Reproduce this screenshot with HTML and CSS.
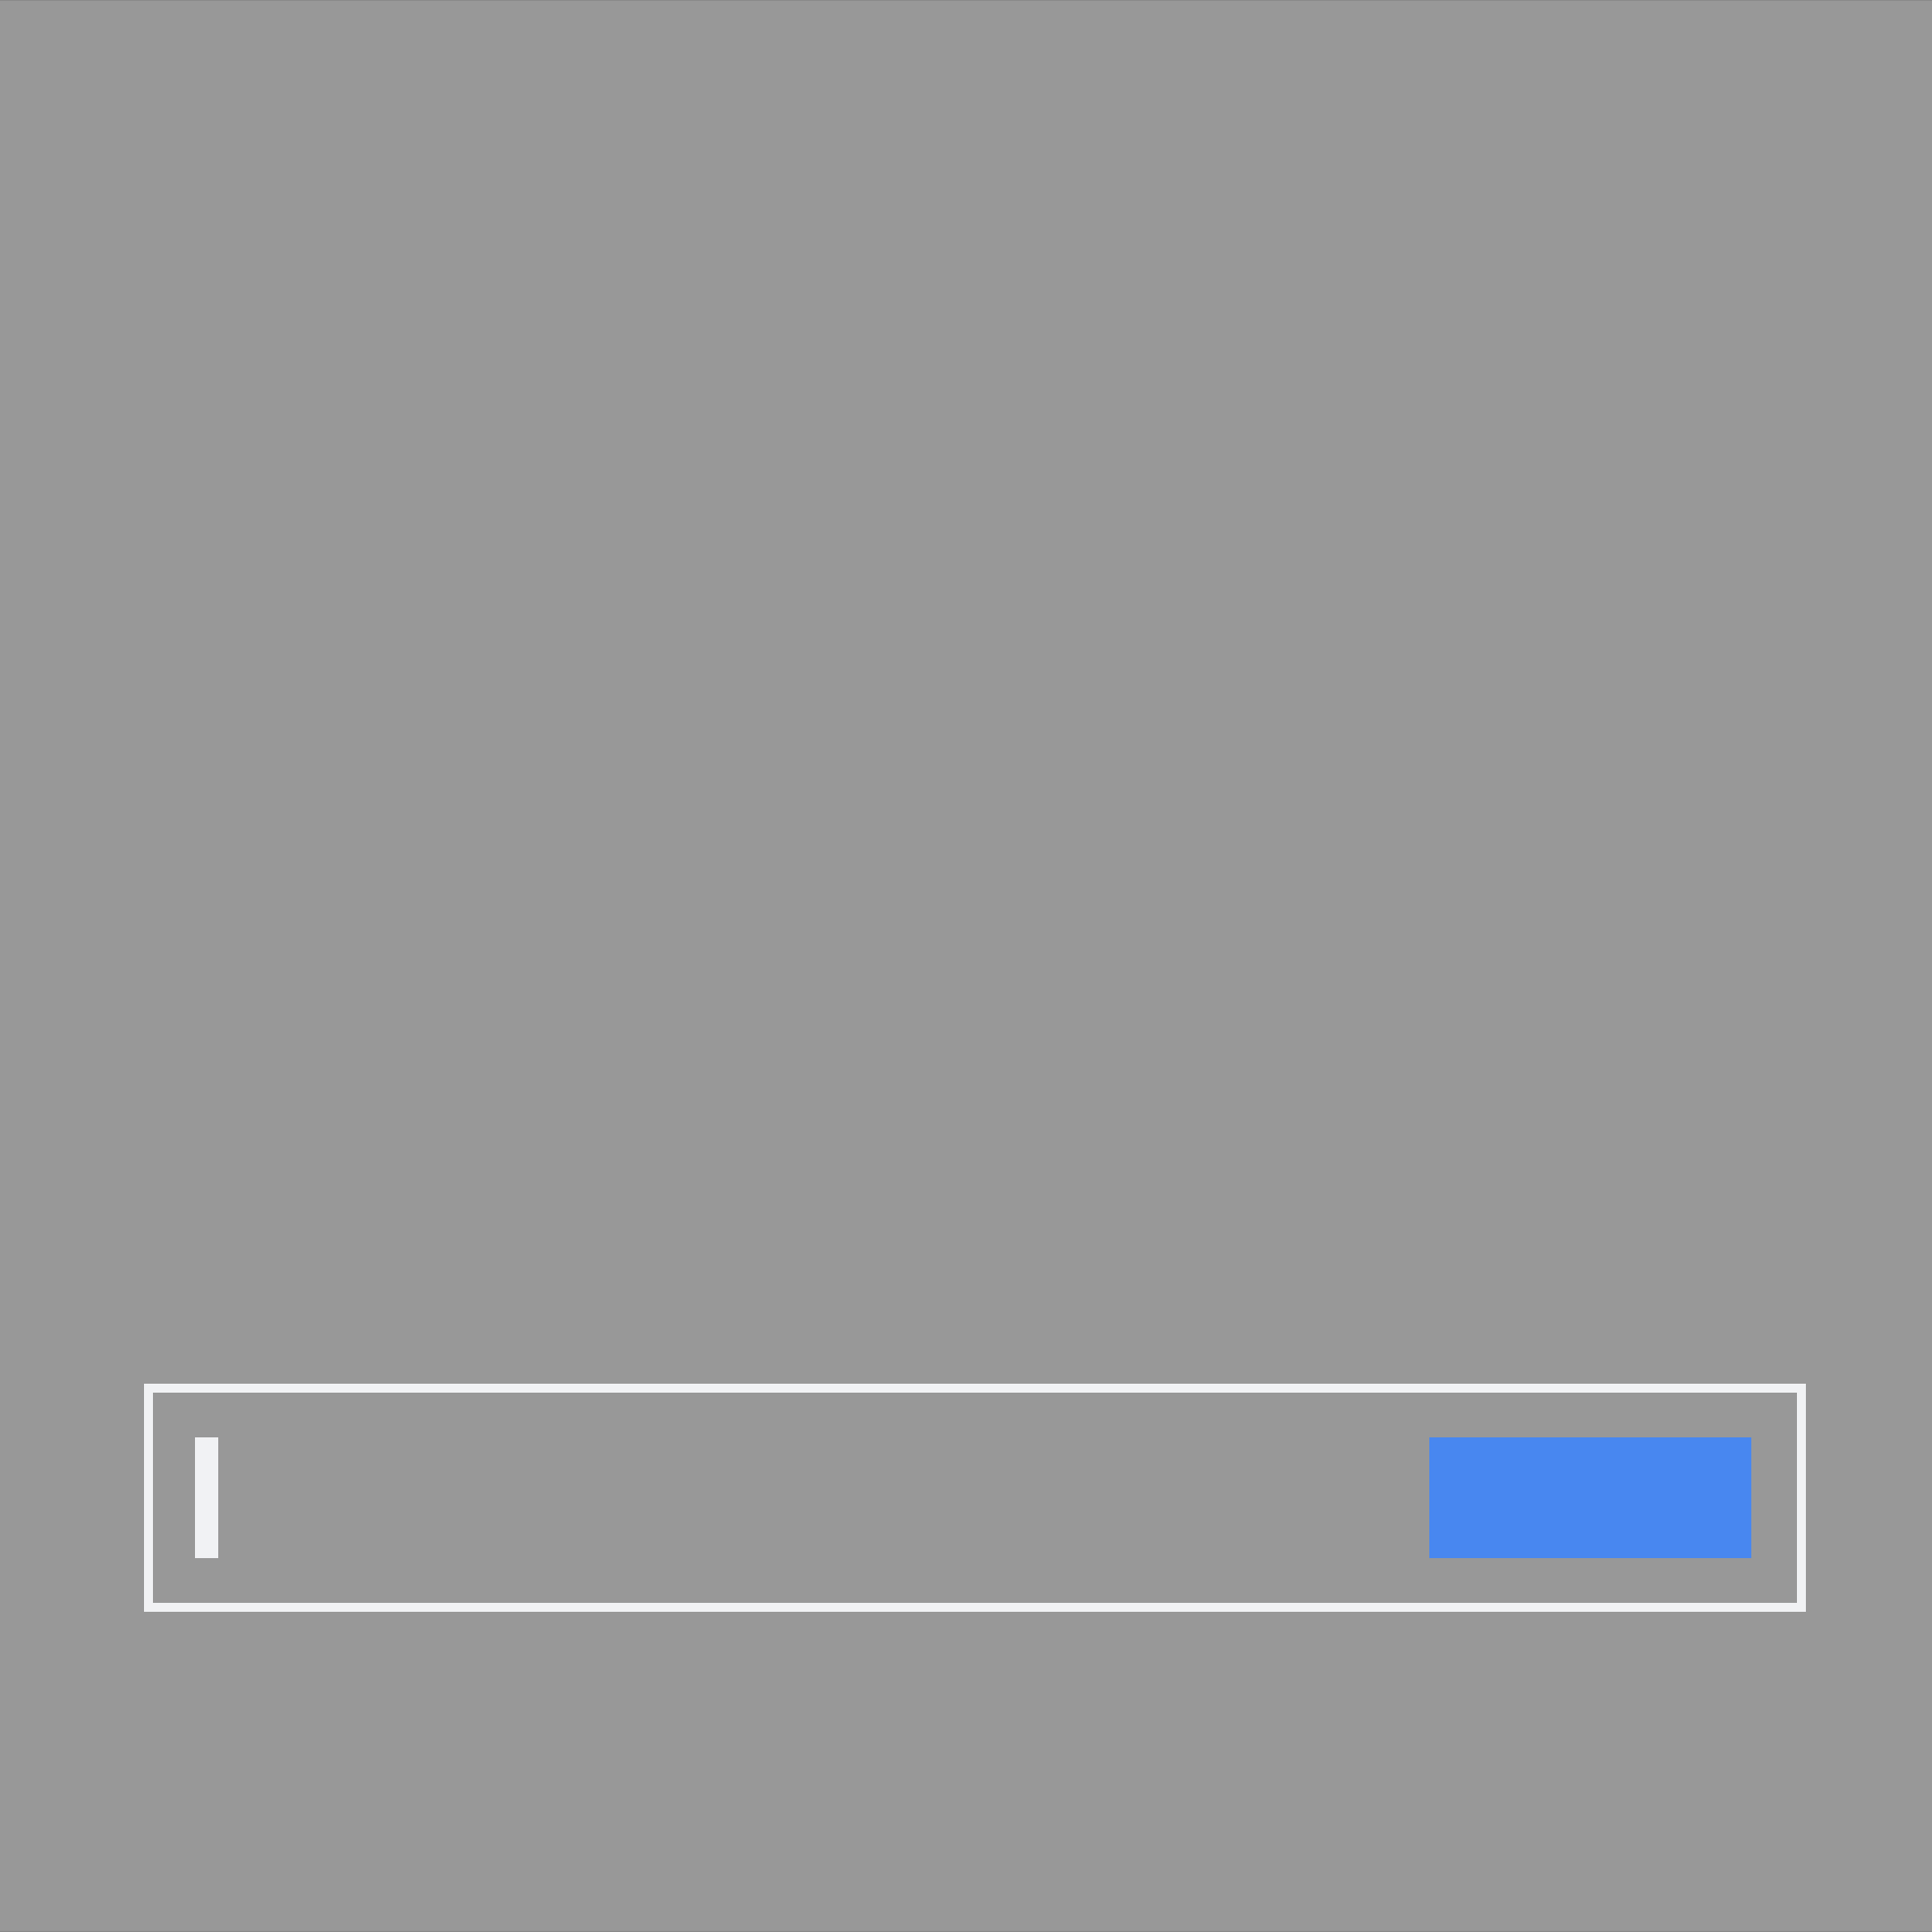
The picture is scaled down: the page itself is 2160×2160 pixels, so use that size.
FILE: index.html
```html
<!DOCTYPE html>
<html>
<head>
<meta charset="utf-8">
<link rel="stylesheet" href="styles.css">
</head>
<body>
<main class="stage">
  <div class="bar">
    <div class="caret"></div>
    <div class="action"></div>
  </div>
</main>
</body>
</html>
```

FILE: styles.css
```css
html, body {
  margin: 0;
  padding: 0;
  background: #989898;
}
.stage {
  width: 2160px;
  height: 2160px;
  box-sizing: border-box;
  padding: 1546px 0 0 161px;
  border-top: 1px solid #8a8a8a;
  border-bottom: 1px solid #8a8a8a;
}
.bar {
  width: 1858px;
  height: 255px;
  box-sizing: border-box;
  border: 10px solid #f1f2f4;
  display: flex;
  align-items: center;
  justify-content: space-between;
  padding: 0 51px 0 47px;
}
.caret {
  width: 26px;
  height: 135px;
  background: #f1f2f4;
}
.action {
  width: 360px;
  height: 135px;
  background: #4887f0;
}
```
